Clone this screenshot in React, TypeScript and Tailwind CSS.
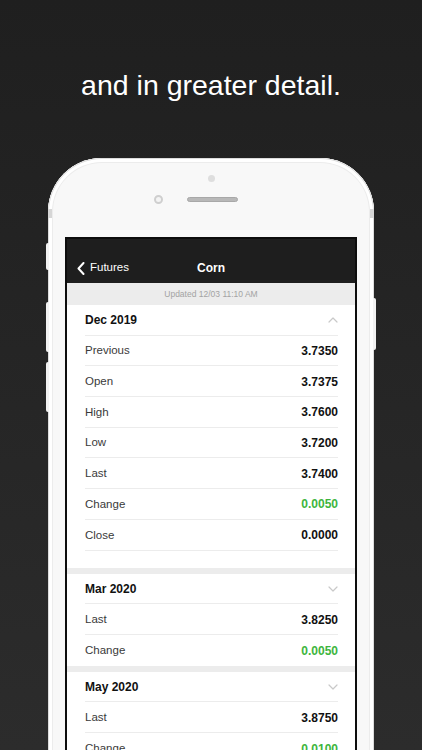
import React from 'react';

type Row = { label: string; value: string; green?: boolean };

const sections: { title: string; open: boolean; rows: Row[] }[] = [
  {
    title: 'Dec 2019',
    open: true,
    rows: [
      { label: 'Previous', value: '3.7350' },
      { label: 'Open', value: '3.7375' },
      { label: 'High', value: '3.7600' },
      { label: 'Low', value: '3.7200' },
      { label: 'Last', value: '3.7400' },
      { label: 'Change', value: '0.0050', green: true },
      { label: 'Close', value: '0.0000' },
    ],
  },
  {
    title: 'Mar 2020',
    open: false,
    rows: [
      { label: 'Last', value: '3.8250' },
      { label: 'Change', value: '0.0050', green: true },
    ],
  },
  {
    title: 'May 2020',
    open: false,
    rows: [
      { label: 'Last', value: '3.8750' },
      { label: 'Change', value: '0.0100', green: true },
    ],
  },
];

function Chevron({ up }: { up: boolean }) {
  return (
    <svg width="10" height="6" viewBox="0 0 10 6" fill="none">
      <polyline
        points={up ? '1,5 5,1 9,5' : '1,1 5,5 9,1'}
        stroke="#c9c9c9"
        strokeWidth="1.2"
        strokeLinecap="round"
        strokeLinejoin="round"
      />
    </svg>
  );
}

function Section({ title, open, rows }: { title: string; open: boolean; rows: Row[] }) {
  return (
    <div className={`pl-[18px] pr-[17px] ${open ? 'pb-[17px]' : ''}`}>
      <div className="h-[30.7px] pt-[1px] flex items-center justify-between border-b border-[#ececec]">
        <span className="text-[12px] font-bold text-[#111]">{title}</span>
        <Chevron up={open} />
      </div>
      {rows.map((r, i) => {
        const last = i === rows.length - 1;
        return (
          <div
            key={r.label}
            className={`h-[30.7px] pt-[1px] flex items-center justify-between ${
              !last || open ? 'border-b border-[#ececec]' : ''
            }`}
          >
            <span className="text-[11.5px] text-[#3a3a3a]">{r.label}</span>
            <span className={`text-[12px] font-bold ${r.green ? 'text-[#3db53d]' : 'text-[#111]'}`}>
              {r.value}
            </span>
          </div>
        );
      })}
    </div>
  );
}

export default function App() {
  return (
    <div
      className="w-[422px] h-[750px] overflow-hidden bg-linear-to-b from-[#1f1f1f] to-[#2c2c2c] pt-[68px]"
      style={{ fontFamily: '"Liberation Sans", Arial, sans-serif' }}
    >
      <h1 className="text-center text-white text-[28.5px] leading-[34px] font-normal">
        and in greater detail.
      </h1>

      {/* phone */}
      <div className="relative ml-[48px] mt-[56px] w-[326px] h-[640px] rounded-t-[54px] bg-[#f8f8f8] shadow-[inset_0_0_0_1px_#dcdcdc,inset_0_0_0_4px_#ffffff,inset_0_0_0_5px_#ececec]">
        {/* side buttons */}
        <div className="absolute left-[-2px] top-[85px] w-[3px] h-[27px] rounded-l-[2px] bg-[#f2f2f2]" />
        <div className="absolute left-[-2px] top-[144px] w-[3px] h-[50px] rounded-l-[2px] bg-[#f2f2f2]" />
        <div className="absolute left-[-2px] top-[204px] w-[3px] h-[50px] rounded-l-[2px] bg-[#f2f2f2]" />
        <div className="absolute right-[-2px] top-[140px] w-[3px] h-[52px] rounded-r-[2px] bg-[#f2f2f2]" />
        {/* antenna bands */}
        <div className="absolute left-0 top-[51px] w-[4px] h-[9px] bg-[#d6d6d6]" />
        <div className="absolute right-0 top-[51px] w-[4px] h-[9px] bg-[#d6d6d6]" />

        <div className="h-[79px] pt-[16.5px]">
          <div className="mx-auto w-[7px] h-[7px] rounded-full bg-[#dedede]" />
          <div className="mt-[13px] flex items-center pl-[106px] gap-[24px]">
            <div className="w-[9px] h-[9px] rounded-full bg-[#f4f4f4] border-[2px] border-[#cfcfcf]" />
            <div className="w-[51px] h-[5px] rounded-full bg-[#b8b8b8] border border-[#a8a8a8]" />
          </div>
        </div>

        {/* screen */}
        <div className="ml-[17px] w-[292px] border-x-2 border-t-2 border-[#0d0d0d] bg-white">
          <div className="h-[44px] bg-[#1e1e1e] pt-[19px]">
            <div className="grid grid-cols-[1fr_auto_1fr] h-[20px] items-center text-white">
              <div className="flex items-center pl-[10px] gap-[5px]">
                <svg width="8" height="13" viewBox="0 0 8 13" fill="none">
                  <polyline
                    points="6.5,1 1.5,6.5 6.5,12"
                    stroke="#ffffff"
                    strokeWidth="2"
                    strokeLinecap="round"
                    strokeLinejoin="round"
                  />
                </svg>
                <span className="text-[11.5px]">Futures</span>
              </div>
              <span className="text-[12px] font-bold">Corn</span>
              <div />
            </div>
          </div>
          <div className="h-[22px] bg-[#ececec] flex items-center justify-center text-[8.5px] text-[#a3a3a3]">
            Updated 12/03 11:10 AM
          </div>
          {sections.map((s, i) => (
            <div key={s.title}>
              {i > 0 && <div className="h-[6px] bg-[#ececec]" />}
              <Section {...s} />
            </div>
          ))}
        </div>
      </div>
    </div>
  );
}
